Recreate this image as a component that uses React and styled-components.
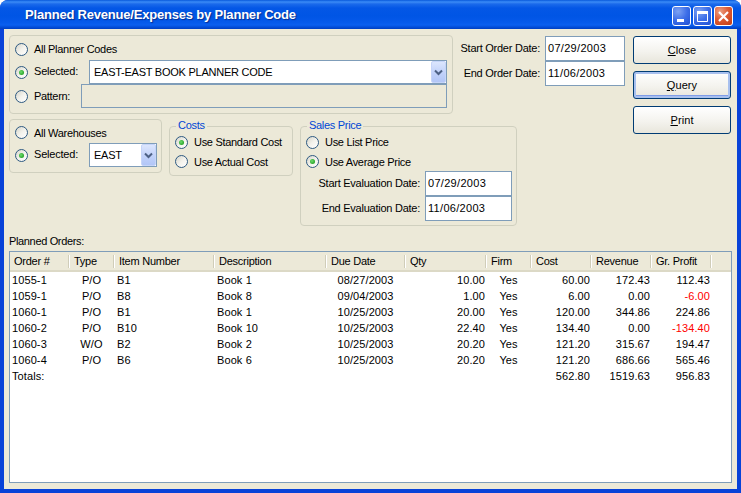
import React from "react";
import styled, { createGlobalStyle } from "styled-components";

const Global = createGlobalStyle`
  html, body { margin: 0; padding: 0; background: #fff; }
  body { font-family: "Liberation Sans", "Noto Sans", sans-serif; font-size: 11px; letter-spacing: 0.1px; color: #000; }
  * { box-sizing: border-box; }
`;

const Window = styled.div`
  width: 741px; height: 493px; display: flex; flex-direction: column;
  border-radius: 8px 8px 0 0; overflow: hidden;
  background: #0842d8;
`;
const TitleBar = styled.div`
  height: 29px; flex: none; display: flex; align-items: flex-start; padding: 0 8px 0 25px;
  background: linear-gradient(180deg, #0a57d6 0, #1f74ee 1px, #3c8bf5 2px, #1a6aeb 4px, #0457e6 8px, #0055e5 16px, #0559ea 22px, #0a5fef 25px, #0046cf 28px, #003fc0 29px);
`;
const Title = styled.div`
  flex: 1; color: #fff; font-weight: 700; font-size: 13px; line-height: 29px;
  letter-spacing: -0.2px; text-shadow: 1px 1px 1px #0b2f8f; white-space: nowrap;
`;
const Controls = styled.div`display: flex; gap: 2px; margin-top: 6px;`;
const Ctl = styled.div`
  width: 19px; height: 20px; border: 1px solid #fff; border-radius: 3px;
  display: flex; align-items: center; justify-content: center;
  background: ${p => p.$close
    ? "radial-gradient(circle at 30% 25%, #eba083 0, #dd5b34 45%, #c33b12 100%)"
    : "radial-gradient(circle at 30% 25%, #7ea3f3 0, #3c6ee8 50%, #1f4fd4 100%)"};
`;

const Frame = styled.div`flex: 1; min-height: 0; padding: 0 4px 4px; display: flex;`;
const Client = styled.div`
  flex: 1; min-width: 0; background: #ece9d8; padding: 6px 5px 6px 5px;
  display: flex; flex-direction: column;
`;

const Upper = styled.div`display: flex; height: 191px;`;
const Forms = styled.div`display: flex; flex-direction: column; gap: 5px; width: 616px;`;
const TopRow = styled.div`display: flex; gap: 7px;`;
const BottomRow = styled.div`display: flex; gap: 7px; align-items: flex-start;`;

const Box = styled.div`
  position: relative; border: 1px solid #d0d0bf; border-radius: 4px;
  width: ${p => p.$w}px; padding: 2px 5px ${p => p.$pb ?? 5}px;
  margin-top: ${p => p.$legend ? 7 : 0}px;
  ${p => p.$legend ? "padding-top: 5px;" : ""}
  ${p => p.$h ? `height: ${p.$h}px;` : ""}
`;
const Legend = styled.div`
  position: absolute; top: -8px; left: 6px; padding: 0 2px; background: #ece9d8;
  color: #0046d5; line-height: 13px; letter-spacing: -0.3px;
`;
const Row = styled.div`display: flex; align-items: center; height: ${p => p.$h}px; white-space: nowrap;`;
const RadioMark = styled.span`
  flex: none; width: 13px; height: 13px; border-radius: 50%; margin-right: 6px;
  border: 1px solid #2e5a82; display: flex; align-items: center; justify-content: center;
  background: linear-gradient(135deg, #d5d4c9 0, #f3f2ec 50%, #fff 100%);
  &::after {
    content: ""; display: ${p => p.$on ? "block" : "none"}; width: 5px; height: 5px; border-radius: 50%;
    background: radial-gradient(circle at 40% 40%, #6fdc6f 0, #2aa52a 70%, #1c8a1c 100%);
  }
`;
const Label = styled.span`
  letter-spacing: -0.3px;
  ${p => p.$w ? `width: ${p.$w}px; flex: none;` : ""}
  ${p => p.$raised ? "margin-bottom: 2px; letter-spacing: -0.2px;" : ""}
`;
const Combo = styled.div`
  width: ${p => p.$w}px; height: 24px; flex: none; background: #fff; border: 1px solid #7f9db9;
  display: flex; align-items: center; padding-left: 4px;
`;
const ComboText = styled.span`flex: 1; font-size: 11px; letter-spacing: -0.25px; padding-bottom: 1px;`;
const ComboBtn = styled.div`
  width: 15px; height: 22px; flex: none; display: flex; align-items: center; justify-content: center;
  background: linear-gradient(180deg, #dce6fd 0, #c3d3fa 50%, #b2c6f7 100%); border: 1px solid #c6d5f9; border-radius: 2px;
`;
const Field = styled.div`
  width: ${p => p.$w}px; height: ${p => p.$h ?? 25}px; flex: none; border: 1px solid #7f9db9;
  background: ${p => p.$disabled ? "#ece9d8" : "#fff"};
  display: flex; align-items: center; padding: 0 0 1px 2px; font-size: 11px; letter-spacing: 0.3px;
`;
const DateRow = styled.div`
  display: flex; align-items: center; justify-content: flex-end; gap: 5px;
  height: 25px; ${p => p.$w ? `width: ${p.$w}px;` : ""} white-space: nowrap;
`;
const DateLabel = styled.span`letter-spacing: -0.25px; margin-bottom: 2px;`;
const Dates = styled.div`display: flex; flex-direction: column; padding-top: 1px; width: 165px;`;

const Buttons = styled.div`display: flex; flex-direction: column; gap: 7px; width: 98px; margin: 1px 0 0 8px;`;
const Btn = styled.div`
  height: 28px; border: 1px solid #003c74; border-radius: 3px; display: flex; align-items: center; justify-content: center;
  background: linear-gradient(180deg, #fff 0, #f4f3ee 55%, #e8e6dc 100%);
  box-shadow: ${p => p.$def ? "inset 0 0 0 2px #a8c0ee, inset 0 -1px 0 2px #7f9ce8" : "none"};
  u { text-decoration: underline; }
`;

const Caption = styled.div`line-height: 13px; margin: 9px 0 3px 0; letter-spacing: -0.35px;`;
const Table = styled.div`flex: 1; min-height: 0; background: #fff; border: 1px solid #7f9db9;`;
const cols = "59px 45px 100px 112px 79px 81px 45px 60px 60px 60px 1fr";
const Head = styled.div`
  display: grid; grid-template-columns: ${cols}; height: 20px;
  background: #ece9d8; border-bottom: 2px solid #dcd9c6;
`;
const HeadCell = styled.div`
  padding-left: 5px; line-height: 19px; position: relative; white-space: nowrap; letter-spacing: -0.25px;
  &:first-child { padding-left: 4px; }
  &::after {
    content: ""; position: absolute; right: -1px; top: 3px; bottom: 3px; width: 2px;
    background: linear-gradient(90deg, #d0cdb9 50%, #fff 50%);
  }
`;
const DataRow = styled.div`display: grid; grid-template-columns: ${cols}; height: 16px; line-height: 16px;`;
const Cell = styled.div`
  text-align: ${p => p.$a ?? "left"}; white-space: nowrap;
  padding: ${p => p.$a === "right" ? "0 1px 0 0" : p.$a === "center" ? "0" : "0 0 0 3px"};
  &:first-child { padding-left: 2px; }
  color: ${p => p.$red ? "#ff0000" : "#000"};
`;

const headers = ["Order #", "Type", "Item Number", "Description", "Due Date", "Qty", "Firm", "Cost", "Revenue", "Gr. Profit"];
const rows = [
  ["1055-1", "P/O", "B1", "Book 1", "08/27/2003", "10.00", "Yes", "60.00", "172.43", "112.43"],
  ["1059-1", "P/O", "B8", "Book 8", "09/04/2003", "1.00", "Yes", "6.00", "0.00", "-6.00"],
  ["1060-1", "P/O", "B1", "Book 1", "10/25/2003", "20.00", "Yes", "120.00", "344.86", "224.86"],
  ["1060-2", "P/O", "B10", "Book 10", "10/25/2003", "22.40", "Yes", "134.40", "0.00", "-134.40"],
  ["1060-3", "W/O", "B2", "Book 2", "10/25/2003", "20.20", "Yes", "121.20", "315.67", "194.47"],
  ["1060-4", "P/O", "B6", "Book 6", "10/25/2003", "20.20", "Yes", "121.20", "686.66", "565.46"],
  ["Totals:", "", "", "", "", "", "", "562.80", "1519.63", "956.83"],
];
const aligns = ["left", "center", "left", "left", "center", "right", "center", "right", "right", "right"];

const Chevron = () => (
  <svg width="9" height="7" viewBox="0 0 9 7"><path d="M1 1.5 L4.5 5 L8 1.5" fill="none" stroke="#4d6185" strokeWidth="2" /></svg>
);

export default function App() {
  return (
    <Window>
      <Global />
      <TitleBar>
        <Title>Planned Revenue/Expenses by Planner Code</Title>
        <Controls>
          <Ctl>
            <svg width="13" height="13" viewBox="0 0 13 13"><rect x="2" y="9" width="7" height="3" fill="#fff" /></svg>
          </Ctl>
          <Ctl>
            <svg width="13" height="13" viewBox="0 0 13 13"><path d="M1.5 1.5h10v10h-10z" fill="none" stroke="#fff" strokeWidth="1" /><rect x="1" y="1" width="11" height="3" fill="#fff" /></svg>
          </Ctl>
          <Ctl $close>
            <svg width="13" height="13" viewBox="0 0 13 13"><path d="M2 2 L11 11 M11 2 L2 11" stroke="#fff" strokeWidth="2.2" /></svg>
          </Ctl>
        </Controls>
      </TitleBar>
      <Frame>
        <Client>
          <Upper>
            <Forms>
              <TopRow>
                <Box $w={444}>
                  <Row $h={22}><RadioMark /><Label>All Planner Codes</Label></Row>
                  <Row $h={24}>
                    <RadioMark $on /><Label $w={55} $raised>Selected:</Label>
                    <Combo $w={358}><ComboText>EAST-EAST BOOK PLANNER CODE</ComboText><ComboBtn><Chevron /></ComboBtn></Combo>
                  </Row>
                  <Row $h={24}>
                    <RadioMark /><Label $w={47}>Pattern:</Label>
                    <Field $w={366} $h={24} $disabled />
                  </Row>
                </Box>
                <Dates>
                  <DateRow><DateLabel>Start Order Date:</DateLabel><Field $w={80}>07/29/2003</Field></DateRow>
                  <DateRow><DateLabel>End Order Date:</DateLabel><Field $w={80}>11/06/2003</Field></DateRow>
                </Dates>
              </TopRow>
              <BottomRow>
                <Box $w={153}>
                  <Row $h={21}><RadioMark /><Label>All Warehouses</Label></Row>
                  <Row $h={24}>
                    <RadioMark $on /><Label $w={55} $raised>Selected:</Label>
                    <Combo $w={68}><ComboText>EAST</ComboText><ComboBtn><Chevron /></ComboBtn></Combo>
                  </Row>
                </Box>
                <Box $w={124} $legend $h={50}>
                  <Legend>Costs</Legend>
                  <Row $h={20}><RadioMark $on /><Label>Use Standard Cost</Label></Row>
                  <Row $h={19}><RadioMark /><Label>Use Actual Cost</Label></Row>
                </Box>
                <Box $w={217} $legend $h={100}>
                  <Legend>Sales Price</Legend>
                  <Row $h={20}><RadioMark /><Label>Use List Price</Label></Row>
                  <Row $h={19}><RadioMark $on /><Label>Use Average Price</Label></Row>
                  <DateRow $w={206}><DateLabel>Start Evaluation Date:</DateLabel><Field $w={87}>07/29/2003</Field></DateRow>
                  <DateRow $w={206}><DateLabel>End Evaluation Date:</DateLabel><Field $w={87}>11/06/2003</Field></DateRow>
                </Box>
              </BottomRow>
            </Forms>
            <Buttons>
              <Btn><span><u>C</u>lose</span></Btn>
              <Btn $def><span><u>Q</u>uery</span></Btn>
              <Btn><span><u>P</u>rint</span></Btn>
            </Buttons>
          </Upper>
          <Caption>Planned Orders:</Caption>
          <Table>
            <Head>
              {headers.map(h => <HeadCell key={h}>{h}</HeadCell>)}
              <div />
            </Head>
            {rows.map(r => (
              <DataRow key={r[0]}>
                {r.map((c, i) => (
                  <Cell key={i} $a={aligns[i]} $red={c.startsWith("-")}>{c}</Cell>
                ))}
              </DataRow>
            ))}
          </Table>
        </Client>
      </Frame>
    </Window>
  );
}
